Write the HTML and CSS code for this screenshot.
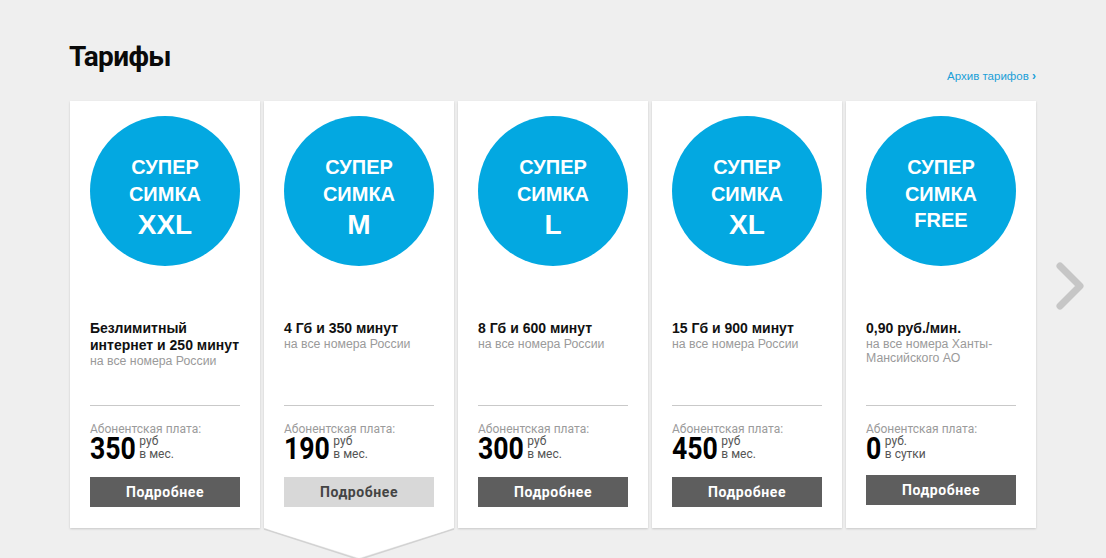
FILE: index.html
```html
<!DOCTYPE html>
<html lang="ru">
<head>
<meta charset="utf-8">
<title>Тарифы</title>
<link rel="stylesheet" href="styles.css">
</head>
<body>
<div class="page">
  <div class="header">
    <h1 class="title">Тарифы</h1>
    <a class="archive" href="#">Архив тарифов <span class="chev">›</span></a>
  </div>
  <div class="cards">
    <div class="card">
      <div class="circle"><span class="c-line">СУПЕР</span><span class="c-line">СИМКА</span><span class="c-big">XXL</span></div>
      <div class="desc"><div class="desc-main">Безлимитный интернет и 250 минут</div><div class="desc-sub">на все номера России</div></div>
      <div class="price">
        <div class="price-label">Абонентская плата:</div>
        <div class="price-row"><span class="price-num">350</span><span class="price-unit">руб<br>в мес.</span></div>
      </div>
      <a class="btn" href="#">Подробнее</a>
    </div>
    <div class="card card-active">
      <div class="circle"><span class="c-line">СУПЕР</span><span class="c-line">СИМКА</span><span class="c-big">M</span></div>
      <div class="desc"><div class="desc-main">4 Гб и 350 минут</div><div class="desc-sub">на все номера России</div></div>
      <div class="price">
        <div class="price-label">Абонентская плата:</div>
        <div class="price-row"><span class="price-num">190</span><span class="price-unit">руб<br>в мес.</span></div>
      </div>
      <a class="btn btn-light" href="#">Подробнее</a>
      <svg class="pointer" width="190" height="32" viewBox="0 0 190 32" aria-hidden="true">
        <polyline points="0,1 95,31.5 190,1" fill="none" stroke="#d2d2d2" stroke-width="1.5"/>
        <polygon points="0,0 95,30 190,0" fill="#ffffff"/>
      </svg>
    </div>
    <div class="card">
      <div class="circle"><span class="c-line">СУПЕР</span><span class="c-line">СИМКА</span><span class="c-big">L</span></div>
      <div class="desc"><div class="desc-main">8 Гб и 600 минут</div><div class="desc-sub">на все номера России</div></div>
      <div class="price">
        <div class="price-label">Абонентская плата:</div>
        <div class="price-row"><span class="price-num">300</span><span class="price-unit">руб<br>в мес.</span></div>
      </div>
      <a class="btn" href="#">Подробнее</a>
    </div>
    <div class="card">
      <div class="circle"><span class="c-line">СУПЕР</span><span class="c-line">СИМКА</span><span class="c-big">XL</span></div>
      <div class="desc"><div class="desc-main">15 Гб и 900 минут</div><div class="desc-sub">на все номера России</div></div>
      <div class="price">
        <div class="price-label">Абонентская плата:</div>
        <div class="price-row"><span class="price-num">450</span><span class="price-unit">руб<br>в мес.</span></div>
      </div>
      <a class="btn" href="#">Подробнее</a>
    </div>
    <div class="card card-free">
      <div class="circle"><span class="c-line">СУПЕР</span><span class="c-line">СИМКА</span><span class="c-line">FREE</span></div>
      <div class="desc"><div class="desc-main">0,90 руб./мин.</div><div class="desc-sub">на все номера Ханты-Мансийского АО</div></div>
      <div class="price">
        <div class="price-label">Абонентская плата:</div>
        <div class="price-row"><span class="price-num price-num-1">0</span><span class="price-unit">руб.<br>в сутки</span></div>
      </div>
      <a class="btn" href="#">Подробнее</a>
    </div>
  </div>
  <a class="next" href="#" aria-label="Далее">
    <svg width="40" height="56" viewBox="0 0 40 56"><polyline points="6,6 26,26 6,46" fill="none" stroke="#c6c6c6" stroke-width="7" stroke-linecap="round" stroke-linejoin="round"/></svg>
  </a>
</div>
</body>
</html>
```

FILE: styles.css
```css
html, body {
  margin: 0;
  padding: 0;
  background: #efefef;
  height: 100%;
  overflow: hidden;
}
body {
  font-family: "Liberation Sans", Arial, sans-serif;
  color: #111;
}
.page {
  position: relative;
  width: 966px;
  padding: 41px 0 0 70px;
}
.header {
  display: flex;
  justify-content: space-between;
  align-items: flex-start;
  height: 60px;
}
.title {
  margin: 0 0 0 -1px;
  font-family: Roboto, "Liberation Sans", sans-serif;
  font-weight: 700;
  font-size: 28px;
  line-height: 32px;
  letter-spacing: -0.6px;
  color: #0a0a0a;
}
.archive {
  margin-top: 29px;
  font-size: 11.5px;
  line-height: 13px;
  color: #1b9fd8;
  text-decoration: none;
}
.archive .chev {
  font-weight: 700;
  font-size: 12px;
}
.cards {
  display: flex;
  gap: 4px;
}
.card {
  position: relative;
  width: 190px;
  box-sizing: border-box;
  padding: 15px 20px 21px;
  background: #fff;
  box-shadow: 0 1px 2px rgba(0, 0, 0, 0.16);
  display: flex;
  flex-direction: column;
}
.circle {
  width: 150px;
  height: 150px;
  box-sizing: border-box;
  padding-top: 38px;
  border-radius: 50%;
  background: #03a8e1;
  color: #fff;
  font-family: "Liberation Sans", Arial, sans-serif;
  font-weight: 700;
  text-align: center;
}
.c-line {
  display: block;
  font-size: 20px;
  line-height: 26.5px;
}
.c-big {
  display: block;
  font-size: 28px;
  line-height: 36px;
}
.desc {
  margin-top: 54px;
  height: 85px;
}
.desc-main {
  font-size: 14px;
  font-weight: 700;
  line-height: 17px;
  color: #111;
}
.desc-sub {
  font-size: 12.3px;
  line-height: 14px;
  color: #9a9a9a;
}
.price {
  border-top: 1px solid #c9c9c9;
  padding-top: 17px;
}
.price-label {
  font-family: Roboto, "Liberation Sans", sans-serif;
  font-size: 12px;
  line-height: 12px;
  color: #9b9b9b;
}
.price-row {
  display: flex;
  align-items: flex-start;
  height: 27px;
}
.price-num {
  display: inline-block;
  font-family: Roboto, "Liberation Sans", sans-serif;
  font-weight: 700;
  font-size: 31px;
  line-height: 27px;
  color: #000;
  transform: scaleX(0.86);
  transform-origin: 0 0;
  margin-right: -7px;
}
.price-num-1 {
  margin-right: -2px;
}
.price-unit {
  margin-left: 3px;
  font-family: Roboto, "Liberation Sans", sans-serif;
  font-size: 12px;
  line-height: 13px;
  color: #555;
}
.btn {
  display: block;
  margin-top: 15px;
  height: 30px;
  line-height: 30px;
  background: #5e5e5e;
  color: #fff;
  text-align: center;
  text-decoration: none;
  font-family: Roboto, "Liberation Sans", sans-serif;
  font-weight: 700;
  font-size: 14px;
  letter-spacing: 0.6px;
}
.btn-light {
  background: #d8d8d8;
  color: #444;
}
.card-free .btn {
  margin-top: 13px;
}
.card-free {
  padding-bottom: 23px;
}
.pointer {
  position: absolute;
  left: 0;
  top: 100%;
  display: block;
}
.next {
  position: absolute;
  left: 1054px;
  top: 260px;
  display: block;
}
.next svg {
  display: block;
}
```
